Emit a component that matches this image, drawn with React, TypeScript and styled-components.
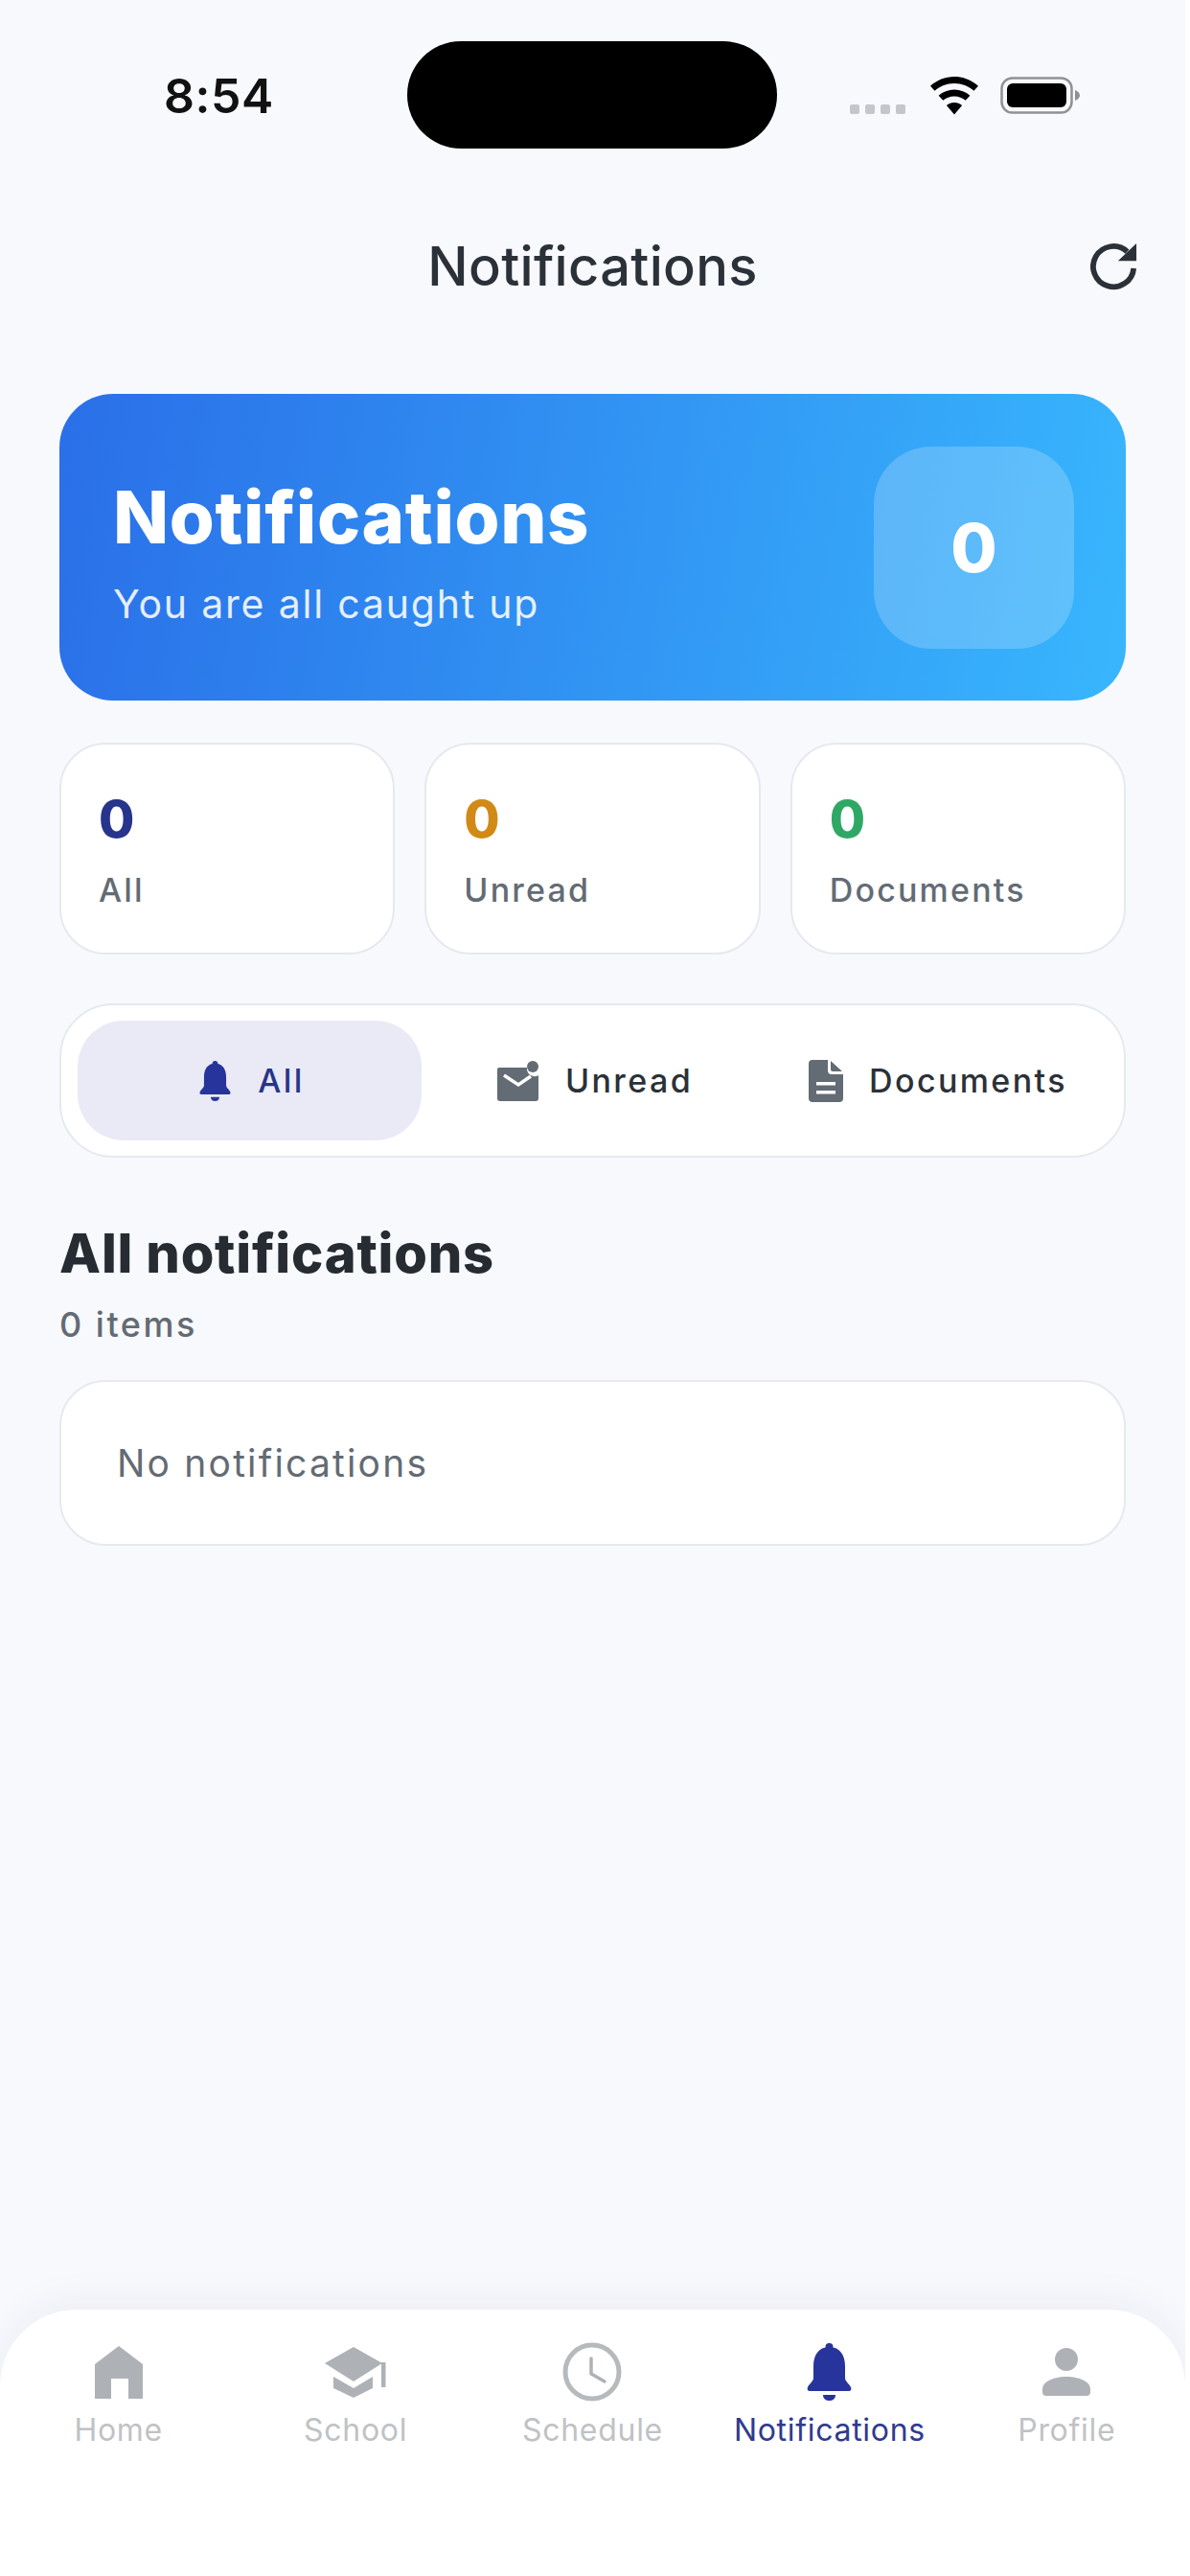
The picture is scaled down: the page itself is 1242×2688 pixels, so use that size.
import styled, { createGlobalStyle } from 'styled-components';

const GlobalStyle = createGlobalStyle`
  html, body {
    margin: 0;
    padding: 0;
    background: #fff;
  }
  * {
    box-sizing: border-box;
  }
`;

const FONT = `Inter, "Noto Sans", "Liberation Sans", sans-serif`;

const Page = styled.div`
  width: 1237px;
  height: 2688px;
  overflow: hidden;
  display: flex;
  flex-direction: column;
  background: #f8f9fd;
  color: #2b3138;
  font-family: ${FONT};
`;

const StatusBar = styled.div`
  height: 198px;
  padding: 43px 0 0 171px;
  display: flex;
  align-items: flex-start;
`;

const Clock = styled.div`
  width: 254px;
  padding-top: 27px;
  font-size: 50px;
  line-height: 60px;
  font-weight: 600;
  color: #111;
  letter-spacing: 0.5px;
`;

const Island = styled.div`
  width: 386px;
  height: 112px;
  border-radius: 56px;
  background: #000;
`;

const StatusIcons = styled.div`
  margin-left: 76px;
  padding-top: 37px;
  display: flex;
  align-items: flex-start;
`;

const SignalDots = styled.div`
  display: flex;
  gap: 6px;
  margin-top: 29px;
  margin-right: 25px;
`;

const SignalDot = styled.span`
  width: 10px;
  height: 10px;
  background: #c4c6cb;
  border-radius: 2px;
`;

const BatterySvg = styled.svg`
  margin-left: 22px;
`;

const Header = styled.div`
  height: 160px;
  padding: 0 49px;
  display: grid;
  grid-template-columns: 50px 1fr 50px;
  align-items: center;
`;

const HeaderTitle = styled.div`
  grid-column: 2;
  text-align: center;
  font-size: 56px;
  font-weight: 500;
  color: #2b3138;
  letter-spacing: 0.3px;
`;

const RefreshButton = styled.div`
  grid-column: 3;
  display: flex;
  color: #2b3138;
`;

const Content = styled.div`
  margin-top: 53px;
  padding: 0 62px;
  display: flex;
  flex-direction: column;
`;

const Hero = styled.div`
  height: 320px;
  border-radius: 56px;
  padding: 0 54px 0 56px;
  display: flex;
  align-items: center;
  justify-content: space-between;
  background: linear-gradient(100deg, #2a6fe8 0%, #38b6fd 100%);
  color: #fff;
`;

const HeroText = styled.div`
  padding-top: 10px;
`;

const HeroTitle = styled.div`
  font-size: 76px;
  line-height: 84px;
  font-weight: 800;
  letter-spacing: 0.6px;
`;

const HeroSub = styled.div`
  margin-top: 23px;
  font-size: 41px;
  line-height: 52px;
  font-weight: 400;
  letter-spacing: 1.8px;
  color: rgba(255, 255, 255, 0.88);
`;

const HeroBadge = styled.div`
  width: 209px;
  height: 211px;
  border-radius: 60px;
  background: rgba(255, 255, 255, 0.2);
  display: flex;
  align-items: center;
  justify-content: center;
  font-size: 70px;
  font-weight: 800;
`;

const Stats = styled.div`
  margin-top: 44px;
  display: grid;
  grid-template-columns: repeat(3, 1fr);
  gap: 31px;
`;

const StatCard = styled.div`
  height: 221px;
  padding: 46px 39px 0;
  border-radius: 48px;
  background: #fff;
  border: 2px solid #e6e9ee;
`;

const StatValue = styled.div<{ $color: string }>`
  font-size: 54px;
  line-height: 64px;
  font-weight: 800;
  color: ${(p) => p.$color};
`;

const StatLabel = styled.div`
  margin-top: 21px;
  font-size: 34px;
  line-height: 42px;
  font-weight: 500;
  letter-spacing: 2.2px;
  color: #636b74;
`;

const Tabs = styled.div`
  margin-top: 51px;
  height: 161px;
  padding: 16px 17px;
  border-radius: 56px;
  background: #fff;
  border: 2px solid #e6e9ee;
  display: grid;
  grid-template-columns: 359px 1fr 1fr;
`;

const Tab = styled.div<{ $active?: boolean }>`
  display: flex;
  align-items: center;
  justify-content: center;
  gap: 27px;
  padding-left: 4px;
  border-radius: 48px;
  background: ${(p) => (p.$active ? '#e9eaf5' : 'transparent')};
  color: ${(p) => (p.$active ? '#27348b' : '#2b3138')};
  font-size: 34px;
  font-weight: 500;
  letter-spacing: 2.4px;

  svg {
    color: ${(p) => (p.$active ? '#27349b' : '#636b74')};
  }
`;

const SectionTitle = styled.div`
  margin-top: 64px;
  font-size: 56px;
  line-height: 72px;
  font-weight: 800;
  letter-spacing: 0.8px;
  color: #262c31;
`;

const SectionCount = styled.div`
  margin-top: 16px;
  font-size: 36px;
  line-height: 44px;
  font-weight: 500;
  letter-spacing: 2.5px;
  color: #636b74;
`;

const EmptyCard = styled.div`
  margin-top: 36px;
  height: 173px;
  padding: 0 58px;
  border-radius: 48px;
  background: #fff;
  border: 2px solid #e6e9ee;
  display: flex;
  align-items: center;
  font-size: 39px;
  font-weight: 400;
  letter-spacing: 2.2px;
  color: #636b74;
`;

const BottomNav = styled.div`
  margin-top: auto;
  height: 278px;
  padding-top: 34px;
  border-radius: 80px 80px 0 0;
  background: #fff;
  box-shadow: 0 -10px 40px rgba(30, 40, 70, 0.05);
  display: grid;
  grid-template-columns: repeat(5, 1fr);
  align-items: start;
`;

const NavItem = styled.div<{ $active?: boolean }>`
  display: flex;
  flex-direction: column;
  align-items: center;
  color: ${(p) => (p.$active ? '#27349b' : '#aeb2b6')};
`;

const NavIcon = styled.div`
  height: 62px;
  display: flex;
  align-items: center;
  justify-content: center;
`;

const NavLabel = styled.div<{ $active?: boolean }>`
  margin-top: 10px;
  font-size: 32px;
  line-height: 40px;
  font-weight: 400;
  letter-spacing: 0.7px;
  color: ${(p) => (p.$active ? '#2f3a8f' : '#bfc2c5')};
`;

const WifiIcon = () => (
  <svg width="52" height="40" viewBox="0 0 52 40" fill="#000">
    <path d="M26 0C16.5 0 7.8 3.6 1 9.8l4.6 5C11 9.8 18.1 6.9 26 6.9s15 2.9 20.4 7.9l4.6-5C44.2 3.6 35.5 0 26 0z" />
    <path d="M26 13.5c-6.2 0-11.9 2.3-16.4 6.2l4.7 5.1c3.1-2.7 7.2-4.4 11.7-4.4s8.6 1.7 11.7 4.4l4.7-5.1c-4.5-3.9-10.2-6.2-16.4-6.2z" />
    <path d="M26 27c-3.1 0-5.9 1.1-8.1 3L26 39.500l8.100-9.500c-2.200-1.900-5-3-8.100-3z" />
  </svg>
);

const BatteryIcon = () => (
  <BatterySvg width="84" height="40" viewBox="0 0 84 40">
    <rect x="1.500" y="1.500" width="73" height="36" rx="11" fill="none" stroke="#8f9194" strokeWidth="2.500" />
    <rect x="7" y="7" width="62" height="25" rx="6" fill="#000" />
    <path d="M78 14c3 1 5 3 5 5.500s-2 4.500-5 5.500z" fill="#8f9194" />
  </BatterySvg>
);

const RefreshIcon = () => (
  <svg width="52" height="52" viewBox="0 0 52 52" fill="none">
    <path d="M40 10A22 22 0 1 0 47 28" stroke="currentColor" strokeWidth="6" />
    <path d="M50 1V20H30z" fill="currentColor" />
  </svg>
);

const MailIcon = () => (
  <svg width="44" height="42" viewBox="0 0 44 42" fill="currentColor">
    <path d="M2 7h29a8 8 0 0 0 12 8v24a3 3 0 0 1-3 3H3a3 3 0 0 1-3-3V9a2 2 0 0 1 2-2z" />
    <circle cx="37" cy="6" r="6" />
    <path d="M7 15l15 10 13-9" fill="none" stroke="#fff" strokeWidth="3.500" />
  </svg>
);

const DocumentIcon = () => (
  <svg width="36" height="44" viewBox="0 0 36 44" fill="currentColor">
    <path d="M4 0h16v11a4 4 0 0 0 4 4h12v25a4 4 0 0 1-4 4H4a4 4 0 0 1-4-4V4a4 4 0 0 1 4-4z" />
    <path d="M23 1l12 11H25a2 2 0 0 1-2-2z" />
    <path d="M8 23h20v3.500H8zM8 32h20v3.500H8z" fill="#fff" />
  </svg>
);

const HomeIcon = () => (
  <svg width="50" height="55" viewBox="0 0 50 55" fill="currentColor">
    <path d="M25 0 50 19V55H35V34H17V55H0V19z" />
  </svg>
);

const SchoolIcon = () => (
  <svg width="64" height="53" viewBox="0 0 64 53" fill="currentColor">
    <path d="M30 0 60 17 30 36 0 17z" />
    <path d="M59 16h4.500v26H59z" />
    <path d="M9 31 30 43 50 31V43L30 53 9 43z" />
  </svg>
);

const ClockIcon = () => (
  <svg width="62" height="62" viewBox="0 0 62 62" fill="none" stroke="#b7babd">
    <circle cx="31" cy="31" r="28" strokeWidth="5" />
    <path d="M30 17V33L44 41" strokeWidth="3.500" stroke="#aeb2b6" strokeLinecap="round" />
  </svg>
);

const BellIcon = ({ width, height }: { width: number; height: number }) => (
  <svg width={width} height={height} viewBox="0 0 47 60" fill="currentColor">
    <circle cx="23.500" cy="4" r="4" />
    <path d="M23.500 4C12 4 7 13 7 24V36C7 40 3 42 1 46 0 48 1 50 3 50H44C46 50 47 48 46 46 44 42 40 40 40 36V24C40 13 35 4 23.500 4z" />
    <path d="M17 54H30C30 58 27 60 23.500 60S17 58 17 54z" />
  </svg>
);

const ProfileIcon = () => (
  <svg width="50" height="50" viewBox="0 0 50 50" fill="currentColor">
    <circle cx="25" cy="12" r="12" />
    <path d="M0 46V43C0 35 12 30 25 30S50 35 50 43V46A4 4 0 0 1 46 50H4A4 4 0 0 1 0 46z" />
  </svg>
);

const tabs = [
  { key: 'all', label: 'All', icon: <BellIcon width={35} height={42} />, active: true },
  { key: 'unread', label: 'Unread', icon: <MailIcon /> },
  { key: 'docs', label: 'Documents', icon: <DocumentIcon /> },
];

const stats = [
  { label: 'All', color: '#27348b' },
  { label: 'Unread', color: '#d18a16' },
  { label: 'Documents', color: '#2fa866' },
];

const navItems = [
  { label: 'Home', icon: <HomeIcon /> },
  { label: 'School', icon: <SchoolIcon /> },
  { label: 'Schedule', icon: <ClockIcon /> },
  { label: 'Notifications', icon: <BellIcon width={47} height={60} />, active: true },
  { label: 'Profile', icon: <ProfileIcon /> },
];

const App = () => {
  return (
    <Page>
      <GlobalStyle />
      <StatusBar>
        <Clock>8:54</Clock>
        <Island />
        <StatusIcons>
          <SignalDots>
            <SignalDot />
            <SignalDot />
            <SignalDot />
            <SignalDot />
          </SignalDots>
          <WifiIcon />
          <BatteryIcon />
        </StatusIcons>
      </StatusBar>
      <Header>
        <HeaderTitle>Notifications</HeaderTitle>
        <RefreshButton>
          <RefreshIcon />
        </RefreshButton>
      </Header>
      <Content>
        <Hero>
          <HeroText>
            <HeroTitle>Notifications</HeroTitle>
            <HeroSub>You are all caught up</HeroSub>
          </HeroText>
          <HeroBadge>0</HeroBadge>
        </Hero>
        <Stats>
          {stats.map((s) => (
            <StatCard key={s.label}>
              <StatValue $color={s.color}>0</StatValue>
              <StatLabel>{s.label}</StatLabel>
            </StatCard>
          ))}
        </Stats>
        <Tabs>
          {tabs.map((t) => (
            <Tab key={t.key} $active={t.active}>
              {t.icon}
              {t.label}
            </Tab>
          ))}
        </Tabs>
        <SectionTitle>All notifications</SectionTitle>
        <SectionCount>0 items</SectionCount>
        <EmptyCard>No notifications</EmptyCard>
      </Content>
      <BottomNav>
        {navItems.map((n) => (
          <NavItem key={n.label} $active={n.active}>
            <NavIcon>{n.icon}</NavIcon>
            <NavLabel $active={n.active}>{n.label}</NavLabel>
          </NavItem>
        ))}
      </BottomNav>
    </Page>
  );
};

export default App;
